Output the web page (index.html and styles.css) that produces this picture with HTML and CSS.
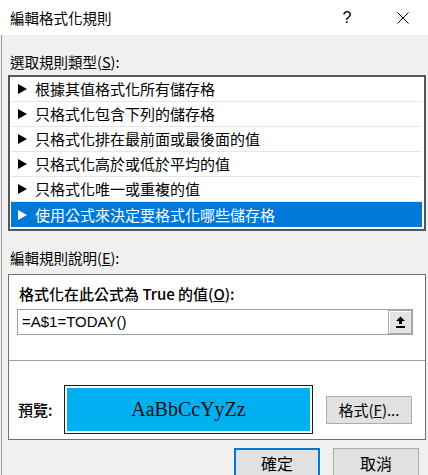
FILE: index.html
```html
<!doctype html>
<html lang="zh-Hant">
<head>
<meta charset="utf-8">
<meta name="viewport" content="width=device-width, initial-scale=1">
<title>編輯格式化規則</title>
<link rel="stylesheet" href="styles.css">
</head>
<body>
	<div class="ventana">
		<div class="barra-titulo">
			<span class="titulo">編輯格式化規則</span>
			<span class="ayuda">?</span>
			<span class="cerrar">
				<svg width="12" height="12" viewBox="0 0 12 12"><path d="M0.5 0.5 L11.5 11.5 M11.5 0.5 L0.5 11.5" stroke="#000" stroke-width="1" fill="none"/></svg>
			</span>
		</div>
		<div class="cuerpo">
			<div class="etiqueta etiqueta-primera">選取規則類型(<u>S</u>):</div>
			<ul class="lista-reglas">
				<li class="regla">根據其值格式化所有儲存格</li>
				<li class="regla">只格式化包含下列的儲存格</li>
				<li class="regla">只格式化排在最前面或最後面的值</li>
				<li class="regla">只格式化高於或低於平均的值</li>
				<li class="regla">只格式化唯一或重複的值</li>
				<li class="regla regla-activa">使用公式來決定要格式化哪些儲存格</li>
			</ul>
			<div class="etiqueta etiqueta-segunda">編輯規則說明(<u>E</u>):</div>
			<div class="descripcion">
				<div class="desc-arriba">
					<div class="desc-titulo">格式化在此公式為 True 的值(<u>O</u>):</div>
					<div class="formula">
						<span class="formula-texto">=A$1=TODAY()</span>
						<span class="boton-ref">
							<svg width="11" height="12" viewBox="0 0 11 12"><path d="M5.5 0.5 L10 5 L7 5 L7 8 L4 8 L4 5 L1 5 Z" fill="#000"/><rect x="1" y="10" width="9" height="2" fill="#000"/></svg>
						</span>
					</div>
				</div>
				<div class="vista">
					<span class="vista-etiqueta">預覽:</span>
					<div class="muestra-marco"><div class="muestra">AaBbCcYyZz</div></div>
					<button class="boton boton-formato">格式(<u>F</u>)...</button>
				</div>
			</div>
			<div class="acciones">
				<button class="boton boton-ok">確定</button>
				<button class="boton">取消</button>
			</div>
		</div>
	</div>
</body>
</html>
```

FILE: styles.css
```css
*
{
	margin: 0;
	padding: 0;
	box-sizing: border-box;
}
html, body
{
	height: 100%;
	overflow: hidden;
}
body
{
	font-family: "Noto Sans CJK TC", "Noto Sans", sans-serif;
	font-size: 15px;
	color: #000;
	background-color: #F0F0F0;
}
.ventana
{
	height: 100%;
	display: flex;
	flex-direction: column;
}
.barra-titulo
{
	height: 35px;
	flex-shrink: 0;
	background-color: #FFF;
	display: flex;
	align-items: center;
	padding-left: 10px;
	padding-right: 2px;
}
.titulo
{
	flex: 1;
	font-size: 14.5px;
	line-height: 20px;
}
.ayuda
{
	width: 20px;
	text-align: center;
	font-family: "Liberation Sans", sans-serif;
	font-size: 16px;
	margin-right: 23px;
}
.cerrar
{
	width: 46px;
	display: flex;
	justify-content: center;
}
.cuerpo
{
	flex: 1;
	margin-left: 1px;
	border-left: 1px solid #9A9A9A;
	padding-left: 6px;
	padding-right: 2px;
}
.etiqueta
{
	line-height: 20px;
	height: 20px;
	padding-left: 2px;
	font-size: 14.5px;
}
.etiqueta-primera
{
	margin-top: 17px;
}
.etiqueta-segunda
{
	margin-top: 17px;
}
.lista-reglas
{
	list-style: none;
	margin-top: 3px;
	background-color: #FFF;
	border: 2px solid #52575D;
	padding: 0 2px 2px 1px;
}
.regla
{
	height: 25px;
	line-height: 24px;
	border-bottom: 1px solid #E6E6E6;
	padding-left: 7px;
	display: flex;
	align-items: center;
	white-space: nowrap;
}
.regla::before
{
	content: "";
	width: 0;
	height: 0;
	border-left: 9px solid #000;
	border-top: 5px solid transparent;
	border-bottom: 5px solid transparent;
	margin-right: 8px;
}
.regla-activa
{
	background-color: #0078D7;
	color: #FFF;
	border-bottom: none;
}
.regla-activa::before
{
	border-left-color: #FFF;
}
.descripcion
{
	margin-top: 6px;
	background-color: #FFF;
	border: 1px solid #6B6E72;
}
.desc-arriba
{
	padding: 9px 12px 25px 8px;
	border-bottom: 1px solid #A0A0A0;
}
.desc-titulo
{
	line-height: 20px;
	height: 20px;
	padding-left: 2px;
	font-weight: 500;
}
.formula
{
	margin-top: 5px;
	height: 26px;
	border: 1px solid #A0A0A0;
	display: flex;
	align-items: stretch;
}
.formula-texto
{
	flex: 1;
	font-family: "Liberation Sans", sans-serif;
	font-size: 15px;
	line-height: 24px;
	padding-left: 4px;
}
.boton-ref
{
	width: 24px;
	background-color: #E4E4E4;
	border: 1px solid #ADADAD;
	box-shadow: inset 1px 1px 0 #FFF;
	display: flex;
	align-items: center;
	justify-content: center;
}
.vista
{
	display: flex;
	align-items: center;
	padding: 24px 13px 5px 9px;
}
.vista-etiqueta
{
	width: 46px;
	line-height: 20px;
	font-weight: 500;
}
.muestra-marco
{
	width: 249px;
	height: 49px;
	border: 1px solid #1A1A1A;
	padding: 2px;
}
.muestra
{
	height: 100%;
	background-color: #00B0F0;
	display: flex;
	align-items: center;
	justify-content: center;
	font-family: "Liberation Serif", serif;
	font-size: 20px;
	color: #111;
}
.boton
{
	font-family: "Noto Sans CJK TC", "Noto Sans", sans-serif;
	font-size: 15px;
	color: #000;
	background-color: #E1E1E1;
	border: 1px solid #ADADAD;
	width: 86px;
	height: 28px;
}
.boton-formato
{
	margin-left: 13px;
}
.acciones
{
	margin-top: 8px;
	display: flex;
	justify-content: flex-end;
	gap: 13px;
	padding-right: 7px;
}
.acciones .boton
{
	height: 30px;
	font-size: 16px;
}
.boton-ok
{
	border: 2px solid #0078D7;
}
```
